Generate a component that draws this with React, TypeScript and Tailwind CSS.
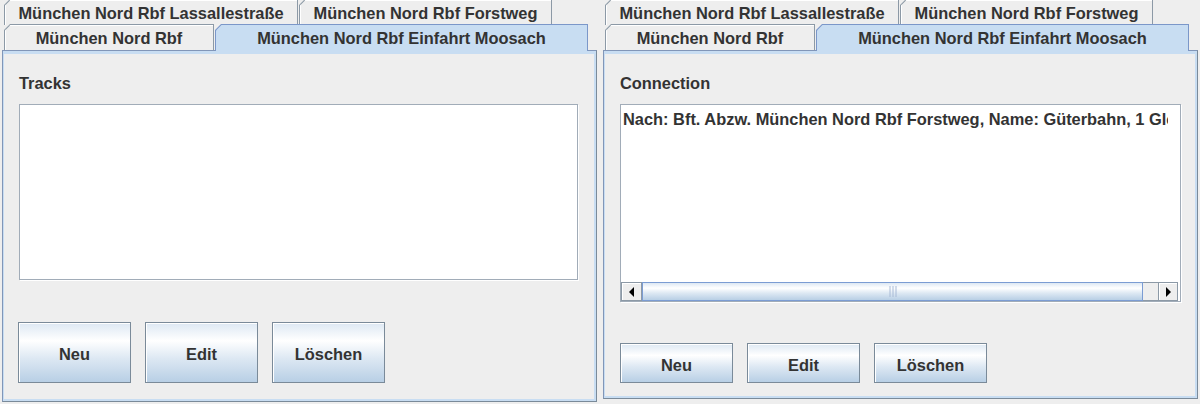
import clsx from 'clsx';

// Metal/Ocean style tab: diagonal top-left corner drawn by two clipped layers
function Tab({
  label,
  selected,
  className,
}: {
  label: string;
  selected?: boolean;
  className: string;
}) {
  return (
    <div
      className={clsx(
        'relative pt-px px-px [clip-path:polygon(6px_0,100%_0,100%_100%,0_100%,0_6px)]',
        selected ? 'bg-[#7b97c9] z-10' : 'bg-[#8c99a6]',
        className
      )}
    >
      <div
        className={clsx(
          'h-full flex items-center justify-center [clip-path:polygon(5.5px_0,100%_0,100%_100%,0_100%,0_5.5px)]',
          selected ? 'bg-[#c8ddf2]' : 'bg-[#eeeeee] shadow-[inset_1px_1px_0_#ffffff]'
        )}
      >
        <span className="text-[16.4px] leading-[18px] font-bold text-[#333333] whitespace-nowrap">{label}</span>
      </div>
    </div>
  );
}

function Button({ label, className }: { label: string; className: string }) {
  return (
    <div
      className={clsx(
        'w-[113px] flex items-center justify-center pt-[3px] border border-[#7a8a99] shadow-[inset_1px_1px_0_#ffffff] bg-[linear-gradient(to_bottom,#dde8f3_0%,#ffffff_30%,#dde8f3_60%,#b8cfe5_100%)]',
        className
      )}
    >
      <span className="text-[16.4px] leading-[18px] font-bold text-[#333333]">{label}</span>
    </div>
  );
}

function TabHeader() {
  return (
    <>
      {/* back run */}
      <div className="flex gap-px pl-[2px] h-[25px] mt-[-1px] shrink-0">
        <Tab label="München Nord Rbf Lassallestraße" className="w-[294px] h-[26px]" />
        <Tab label="München Nord Rbf Forstweg" className="w-[253px] h-[26px]" />
      </div>
      {/* front run */}
      <div className="flex items-start gap-px pl-[2px] h-[26px] shrink-0">
        <Tab label="München Nord Rbf" className="w-[210px] h-[26px]" />
        <Tab label="München Nord Rbf Einfahrt Moosach" selected className="w-[373px] h-[27px]" />
      </div>
    </>
  );
}

const contentBox =
  'flex-1 flex flex-col border border-[#8196b8] border-r-[#7a8a99] border-b-[#7a8a99] bg-[#eeeeee] shadow-[inset_0_3px_0_#c8ddf2,inset_1px_0_0_#c8ddf2,inset_-2px_0_0_#c8ddf2,inset_0_-2px_0_#c8ddf2] pl-[16px] pt-[23px]';

function TracksPanel() {
  return (
    <div className="flex flex-col w-[595px] h-[402px] ml-[2px]">
      <TabHeader />
      <div className={contentBox}>
        <div className="text-[16.4px] leading-[18px] font-bold text-[#333333]">Tracks</div>
        <div className="mt-[12px] w-[559px] h-[176px] bg-white border border-[#a1acb8] shadow-[1px_1px_0_#ffffff]" />
        <div className="flex gap-[14px] mt-[42px] ml-[-1px]">
          <Button label="Neu" className="h-[61px]" />
          <Button label="Edit" className="h-[61px]" />
          <Button label="Löschen" className="h-[61px]" />
        </div>
      </div>
    </div>
  );
}

function ConnectionPanel() {
  return (
    <div className="flex flex-col w-[595px] h-[399px] ml-[6px]">
      <TabHeader />
      <div className={contentBox}>
        <div className="text-[16.4px] leading-[18px] font-bold text-[#333333]">Connection</div>
        <div className="mt-[12px] w-[561px] h-[198px] bg-white border border-[#a1acb8] shadow-[1px_1px_0_#ffffff] flex flex-col">
          <div className="flex-1 w-[547px] overflow-hidden whitespace-nowrap pl-[2px] pt-[5px] text-[16.4px] leading-[18px] font-bold text-[#333333]">
            Nach: Bft. Abzw. München Nord Rbf Forstweg, Name: Güterbahn, 1 Gleis
          </div>
          {/* horizontal scrollbar */}
          <div className="flex h-[19px] shrink-0 mr-[2px]">
            <div className="w-[21px] border border-[#8c99a6] bg-[#eeeeee] shadow-[inset_1px_1px_0_#ffffff] flex items-center justify-center">
              <div className="w-0 h-0 border-y-[5px] border-y-transparent border-r-[5px] border-r-black" />
            </div>
            <div className="w-[501px] border border-[#7b9cd3] bg-[linear-gradient(to_bottom,#dde8f3_0%,#ffffff_30%,#dde8f3_60%,#b8cfe5_100%)] flex items-center justify-center">
              <svg width="8" height="11" viewBox="0 0 8 11">
                <path d="M1 0V11M4 0V11M7 0V11" stroke="#a8bad6" strokeWidth="1" />
              </svg>
            </div>
            <div className="flex-1 border-y border-[#8c99a6] bg-[#eeeeee]" />
            <div className="w-[20px] border border-[#8c99a6] bg-[#eeeeee] shadow-[inset_1px_1px_0_#ffffff] flex items-center justify-center">
              <div className="w-0 h-0 border-y-[5px] border-y-transparent border-l-[5px] border-l-black" />
            </div>
          </div>
        </div>
        <div className="flex gap-[14px] mt-[41px]">
          <Button label="Neu" className="h-[40px]" />
          <Button label="Edit" className="h-[40px]" />
          <Button label="Löschen" className="h-[40px]" />
        </div>
      </div>
    </div>
  );
}

export default function App() {
  return (
    <div className="w-[1200px] h-[404px] overflow-hidden bg-[#eeeeee] flex items-start font-['Liberation_Sans',Arial,sans-serif]">
      <TracksPanel />
      <ConnectionPanel />
    </div>
  );
}
